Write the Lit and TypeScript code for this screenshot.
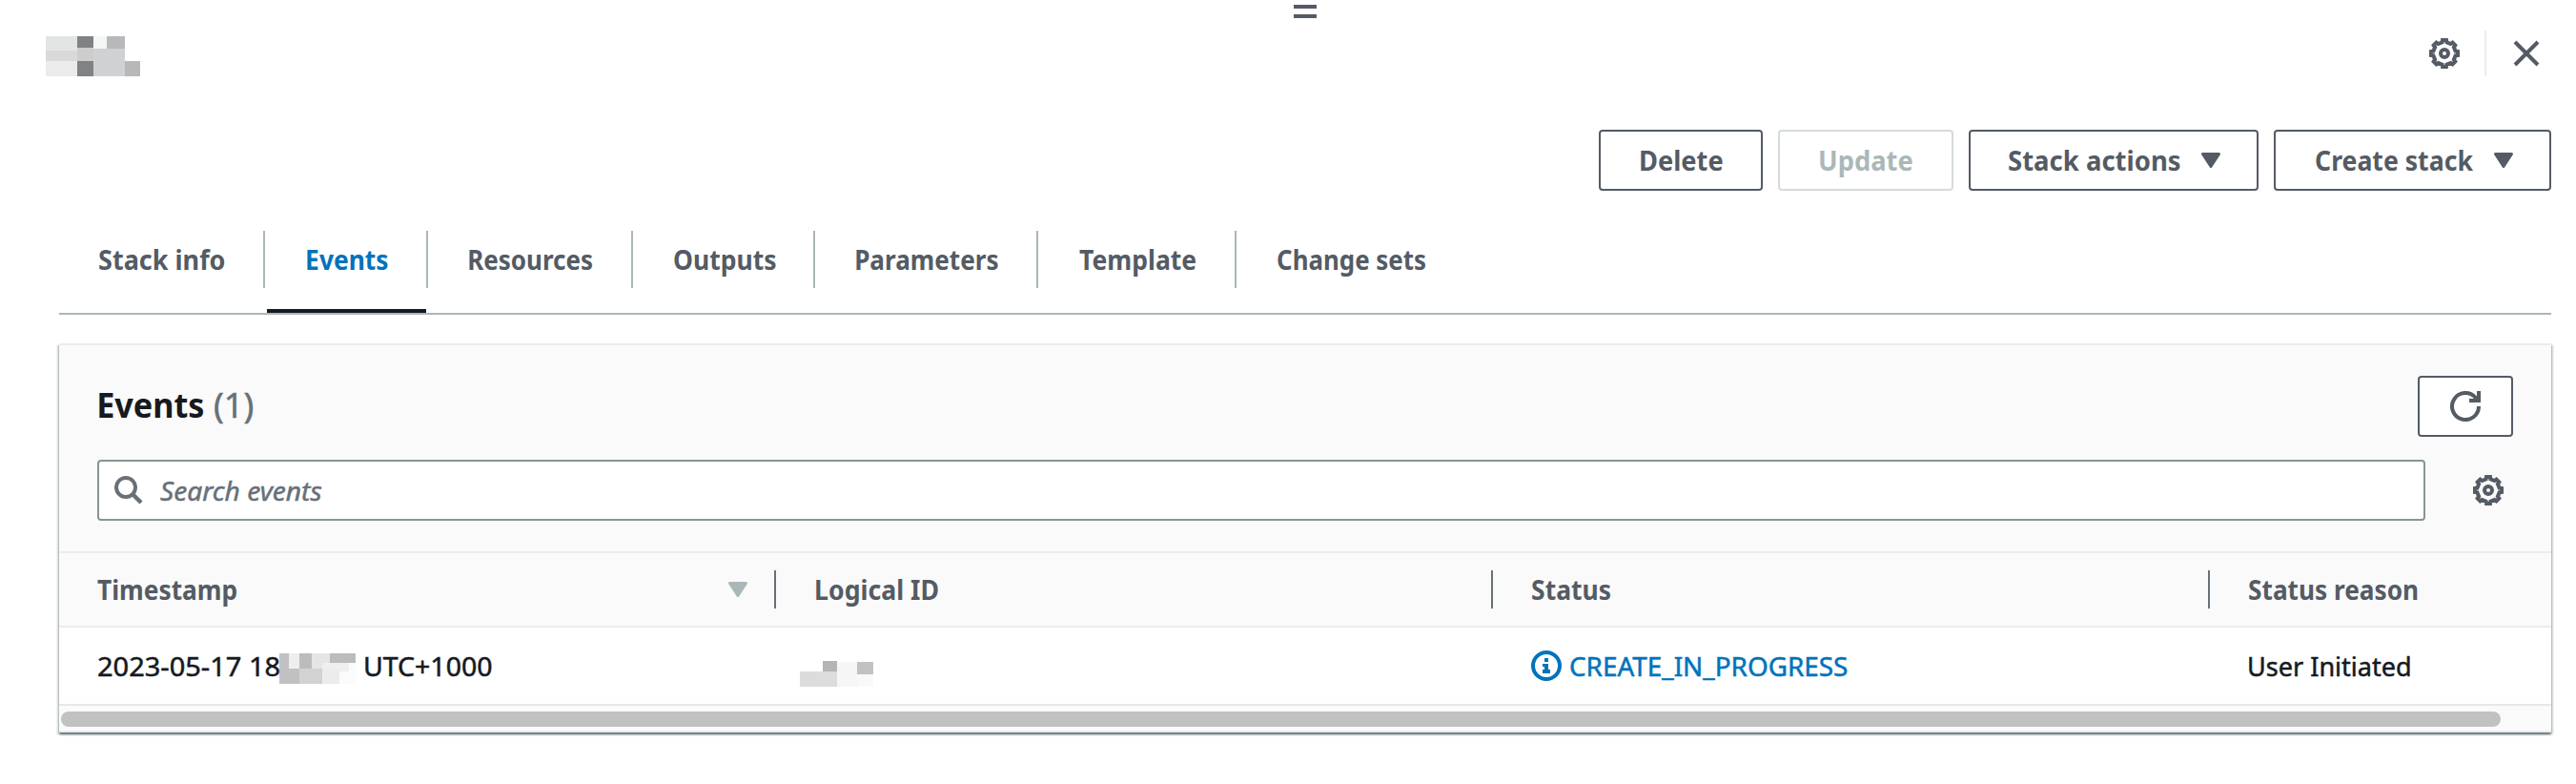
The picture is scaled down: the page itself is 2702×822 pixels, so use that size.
import { LitElement, html, css, svg } from "lit";
import { customElement, property } from "lit/decorators.js";

/** A single line of text fitted to a given visible width. */
@customElement("fit-text")
class FitText extends LitElement {
  @property({ type: Number }) w = 0;

  static styles = css`
    :host { display: block; flex: none; white-space: nowrap; }
    .t { display: inline-block; transform-origin: 0 50%; }
  `;

  render() {
    return html`<span class="t"><slot></slot></span>`;
  }

  firstUpdated() {
    const cs = getComputedStyle(this);
    const ctx = document.createElement("canvas").getContext("2d")!;
    ctx.font = `${cs.fontStyle} ${cs.fontWeight} ${cs.fontSize} ${cs.fontFamily}`;
    const m = ctx.measureText((this.textContent || "").trim());
    const left = -m.actualBoundingBoxLeft;
    const ink = m.actualBoundingBoxRight - left;
    const k = this.w / ink;
    this.style.width = `${this.w}px`;
    const t = this.renderRoot.querySelector(".t") as HTMLElement;
    t.style.transform = `translateX(${-left * k}px) scaleX(${k})`;
  }
}

type Cell = [number, number, number, number, string];

const mosaic = (w: number, h: number, cells: Cell[]) => html`
  <svg class="mosaic" width=${w} height=${h} viewBox="0 0 ${w} ${h}" shape-rendering="crispEdges">
    ${cells.map(([x, y, cw, ch, c]) => svg`<rect x=${x} y=${y} width=${cw} height=${ch} fill=${c} />`)}
  </svg>`;

const nameCells: Cell[] = [
  [0, 0, 33, 15, "#e2e5e4"], [33, 0, 17, 12, "#808285"], [50, 0, 14, 13, "#f4f6f5"], [64, 0, 19, 13, "#b7b8ba"],
  [0, 15, 33, 11, "#d9d9d9"], [33, 12, 17, 14, "#cdcdcd"], [50, 13, 33, 29, "#d0d1d3"],
  [0, 26, 33, 16, "#ebebeb"], [33, 26, 17, 16, "#808285"], [83, 26, 16, 16, "#b7b8ba"],
];
const timeCells: Cell[] = [
  [0, 0, 10, 16, "#c1c1c3"], [10, 0, 11, 16, "#eeeeee"], [21, 0, 13, 16, "#bbbcbe"], [34, 0, 19, 16, "#e5e5e5"],
  [53, 0, 27, 10, "#bbbcbe"], [45, 10, 28, 9, "#efefef"], [73, 10, 7, 9, "#fafafa"],
  [0, 16, 21, 16, "#c1c1c3"], [21, 16, 24, 16, "#d2d2d2"], [45, 16, 18, 16, "#ececec"], [63, 19, 17, 13, "#fbfbfb"],
];
const idCells: Cell[] = [
  [24, 0, 15, 11, "#b3b4b6"], [0, 11, 39, 16, "#dcdcdc"], [39, 1, 21, 26, "#f6f6f6"],
  [60, 1, 17, 13, "#c1c2c4"], [60, 14, 17, 13, "#f8faf9"],
];

const gearPath = (() => {
  const pts: string[] = [];
  for (let i = 0; i < 8; i++) {
    const a = (i * Math.PI) / 4;
    const at = (x: number, y: number) =>
      `${(16 + x * Math.cos(a) - y * Math.sin(a)).toFixed(2)} ${(16 + x * Math.sin(a) + y * Math.cos(a)).toFixed(2)}`;
    pts.push(at(11.6, -2.4), at(14, -2), at(14, 2), at(11.6, 2.4));
  }
  return `M${pts.join("L")}Z`;
})();

const gear = html`<svg class="icon" width="32" height="32" viewBox="0 0 32 32">
  <path d=${gearPath} fill="none" stroke="currentColor" stroke-width="4" />
  <circle cx="16" cy="16" r="4" fill="none" stroke="currentColor" stroke-width="4" />
</svg>`;

const caret = html`<svg class="caret" width="20" height="16" viewBox="0 0 20 16">
  <path d="M1.5 1.5H18.5L10 14.5Z" fill="currentColor" stroke="currentColor" stroke-width="3" stroke-linejoin="round" />
</svg>`;

const closeIcon = html`<svg class="icon" width="28" height="28" viewBox="0 0 28 28">
  <path d="M2 2L26 26M26 2L2 26" fill="none" stroke="currentColor" stroke-width="4" />
</svg>`;

const refreshIcon = html`<svg class="icon" width="32" height="32" viewBox="0 0 32 32">
  <path d="M30 16A14 14 0 1 1 26.5 6.8L29 10" fill="none" stroke="currentColor" stroke-width="4" />
  <path d="M28 0H32V12H20V8H28Z" fill="currentColor" />
</svg>`;

const searchIcon = html`<svg class="icon" width="30" height="30" viewBox="0 0 30 30">
  <circle cx="12" cy="12" r="10" fill="none" stroke="currentColor" stroke-width="4" />
  <path d="M18.5 18.5L28 28" fill="none" stroke="currentColor" stroke-width="4.4" />
</svg>`;

const infoIcon = html`<svg class="icon" width="32" height="32" viewBox="0 0 32 32">
  <circle cx="16" cy="16" r="14" fill="none" stroke="currentColor" stroke-width="4" />
  <path d="M14 8H18V12H14ZM12 14H18V20H20V24H12V20H14V17H12Z" fill="currentColor" shape-rendering="crispEdges" />
</svg>`;

const tabs: [string, number, number, boolean][] = [
  ["Stack info", 132, 216, false],
  ["Events", 84.5, 171, true],
  ["Resources", 129, 215, false],
  ["Outputs", 106.5, 191, false],
  ["Parameters", 148.5, 234, false],
  ["Template", 122.5, 208, false],
  ["Change sets", 155, 240, false],
];

@customElement("app-root")
class AppRoot extends LitElement {
  static styles = css`
    :host {
      display: block;
      width: 2702px;
      height: 822px;
      overflow: hidden;
      background: #fff;
      font-family: "Noto Sans", "Open Sans", sans-serif;
      font-size: 28px;
      line-height: 40px;
      color: #16191f;
    }
    * { box-sizing: border-box; }
    svg { display: block; flex: none; }

    .handle {
      width: 24px; height: 14px; margin: 0 0 0 1357px;
      border-top: 4px solid #545b64; border-bottom: 4px solid #545b64;
    }
    .grip { padding-top: 5px; height: 32px; }

    .top { display: flex; justify-content: space-between; height: 48px; padding: 0 38px 0 48px; color: #545b64; }
    .top .mosaic { margin-top: 6px; }
    .tools { display: flex; align-items: center; }
    .rule { width: 2px; height: 48px; background: #eaeded; margin: 0 28px 0 26px; }

    .actions { display: flex; justify-content: flex-end; gap: 16px; padding: 56px 26px 0 0; }
    .btn {
      display: flex; align-items: center; height: 64px; border: 2px solid #545b64; border-radius: 4px;
      color: #545b64; background: #fff; font-weight: 700; padding: 0 38px 0 41.5px;
    }
    .btn .caret { margin-left: 22px; }
    .btn.delete { width: 172px; }
    .btn.update { width: 184px; padding-left: 42px; border-color: #d5dbdb; color: #aab7b8; }
    .btn.menu { width: 304px; padding-left: 40px; }
    .btn.create { width: 291px; }

    .tabs {
      display: flex; margin: 42px 26px 0 62px; height: 88px; border-bottom: 2px solid #aab7b8;
      font-weight: 700; color: #545b64;
    }
    .tab { height: 86px; padding-bottom: 22px; }
    .tab.active { border-bottom: 4px solid #16191f; padding-bottom: 18px; color: #0073bb; margin-left: 2px; width: 167px; }
    .label { display: flex; align-items: center; height: 60px; padding-left: 43px; }
    .tab .label { border-right: 2px solid #aab7b8; }
    .tab:first-child .label { padding-left: 42px; }
    .tab:last-child .label { border-right: 0; }
    .tab.active .label { width: 169px; padding-left: 42px; }
    .tab.active + .tab { margin-left: 2px; width: 215px; }

    .panel {
      margin: 30px 26px 0 62px; height: 408px; background: #fafafa; border-top: 2px solid #eaeded;
      box-shadow: 0 2px 2px 0 rgba(0, 28, 36, .5), 2px 2px 2px 0 rgba(0, 28, 36, .15), -2px 2px 2px 0 rgba(0, 28, 36, .15);
    }
    .head { display: flex; justify-content: space-between; padding: 32px 40px 0 42px; height: 120px; }
    .title { display: flex; gap: 11px; font-size: 36px; line-height: 62px; height: 62px; font-weight: 700; }
    .count { color: #687078; font-weight: 400; }
    .refresh { width: 100px; justify-content: center; padding: 0; }
    .filter { display: flex; align-items: center; padding: 0 50px 0 40px; height: 64px; color: #545b64; }
    .search {
      flex: 1; display: flex; align-items: center; height: 64px; border: 2px solid #879596; border-radius: 4px;
      background: #fff; padding-left: 16px; color: #687078; font-style: italic; gap: 18px;
    }
    .search, .count, .td { -webkit-text-stroke: 0.5px currentColor; }
    .filter > .icon { margin-left: 50px; }

    .grid { display: grid; grid-template-columns: 752px 752px 752px 358px; margin-top: 32px; }
    .th {
      display: flex; align-items: center; height: 80px; border-top: 2px solid #eaeded; border-bottom: 2px solid #eaeded;
      font-weight: 700; color: #545b64; padding-left: 40.5px;
    }
    .th:first-child { padding-left: 40px; }
    .th:nth-child(2) { padding-left: 42px; }
    .split { width: 2px; height: 40px; background: #687078; margin-left: auto; }
    .th .caret { margin-left: auto; color: #aab7b8; }
    .th .caret + .split { margin-left: 28px; }
    .td {
      display: flex; align-items: center; height: 82px; background: #fff; border-bottom: 2px solid #e7e7e7;
      padding: 0 0 0 41px;
    }
    .td.id { padding-left: 25px; }
    .td.id .mosaic { margin-top: 17px; }
    .td.time .mosaic { margin: 6px 10px 0 0; }
    .status { display: flex; align-items: center; gap: 9px; color: #0073bb; }
    .status fit-text { -webkit-text-stroke: 0.5px #0073bb; }
    .search fit-text { -webkit-text-stroke: 0.5px #687078; }
    .td.st { padding-left: 40px; }
    .scroll { padding: 6px 0 0 2px; height: 28px; border-bottom: 2px solid #eaeded; }
    .thumb { width: 2559px; height: 16px; border-radius: 8px; background: #c1c1c1; }
  `;

  render() {
    return html`
      <div class="grip"><div class="handle"></div></div>
      <div class="top">
        ${mosaic(99, 42, nameCells)}
        <div class="tools">${gear}<div class="rule"></div>${closeIcon}</div>
      </div>
      <div class="actions">
        <div class="btn delete"><fit-text w="86">Delete</fit-text></div>
        <div class="btn update"><fit-text w="97">Update</fit-text></div>
        <div class="btn menu"><fit-text w="179.5">Stack actions</fit-text>${caret}</div>
        <div class="btn create"><fit-text w="165.5">Create stack</fit-text>${caret}</div>
      </div>
      <div class="tabs">
        ${tabs.map(([t, w, full, on]) => html`
          <div class="tab ${on ? "active" : ""}" style=${on ? "" : `width:${full}px`}>
            <div class="label"><fit-text w=${w}>${t}</fit-text></div>
          </div>`)}
      </div>
      <div class="panel">
        <div class="head">
          <div class="title"><fit-text w="109.5">Events</fit-text><fit-text class="count" w="40.5">(1)</fit-text></div>
          <div class="btn refresh">${refreshIcon}</div>
        </div>
        <div class="filter">
          <div class="search">${searchIcon}<fit-text w="169.5">Search events</fit-text></div>
          ${gear}
        </div>
        <div class="grid">
          <div class="th"><fit-text w="146.5">Timestamp</fit-text>${caret}<div class="split"></div></div>
          <div class="th"><fit-text w="127.5">Logical ID</fit-text><div class="split"></div></div>
          <div class="th"><fit-text w="82">Status</fit-text><div class="split"></div></div>
          <div class="th"><fit-text w="177">Status reason</fit-text></div>
          <div class="td time">
            <fit-text w="190">2023-05-17 18</fit-text>${mosaic(80, 32, timeCells)}<fit-text w="132.5">UTC+1000</fit-text>
          </div>
          <div class="td id">${mosaic(77, 27, idCells)}</div>
          <div class="td st"><div class="status">${infoIcon}<fit-text w="291">CREATE_IN_PROGRESS</fit-text></div></div>
          <div class="td"><fit-text w="168.5">User Initiated</fit-text></div>
        </div>
        <div class="scroll"><div class="thumb"></div></div>
      </div>
    `;
  }
}
